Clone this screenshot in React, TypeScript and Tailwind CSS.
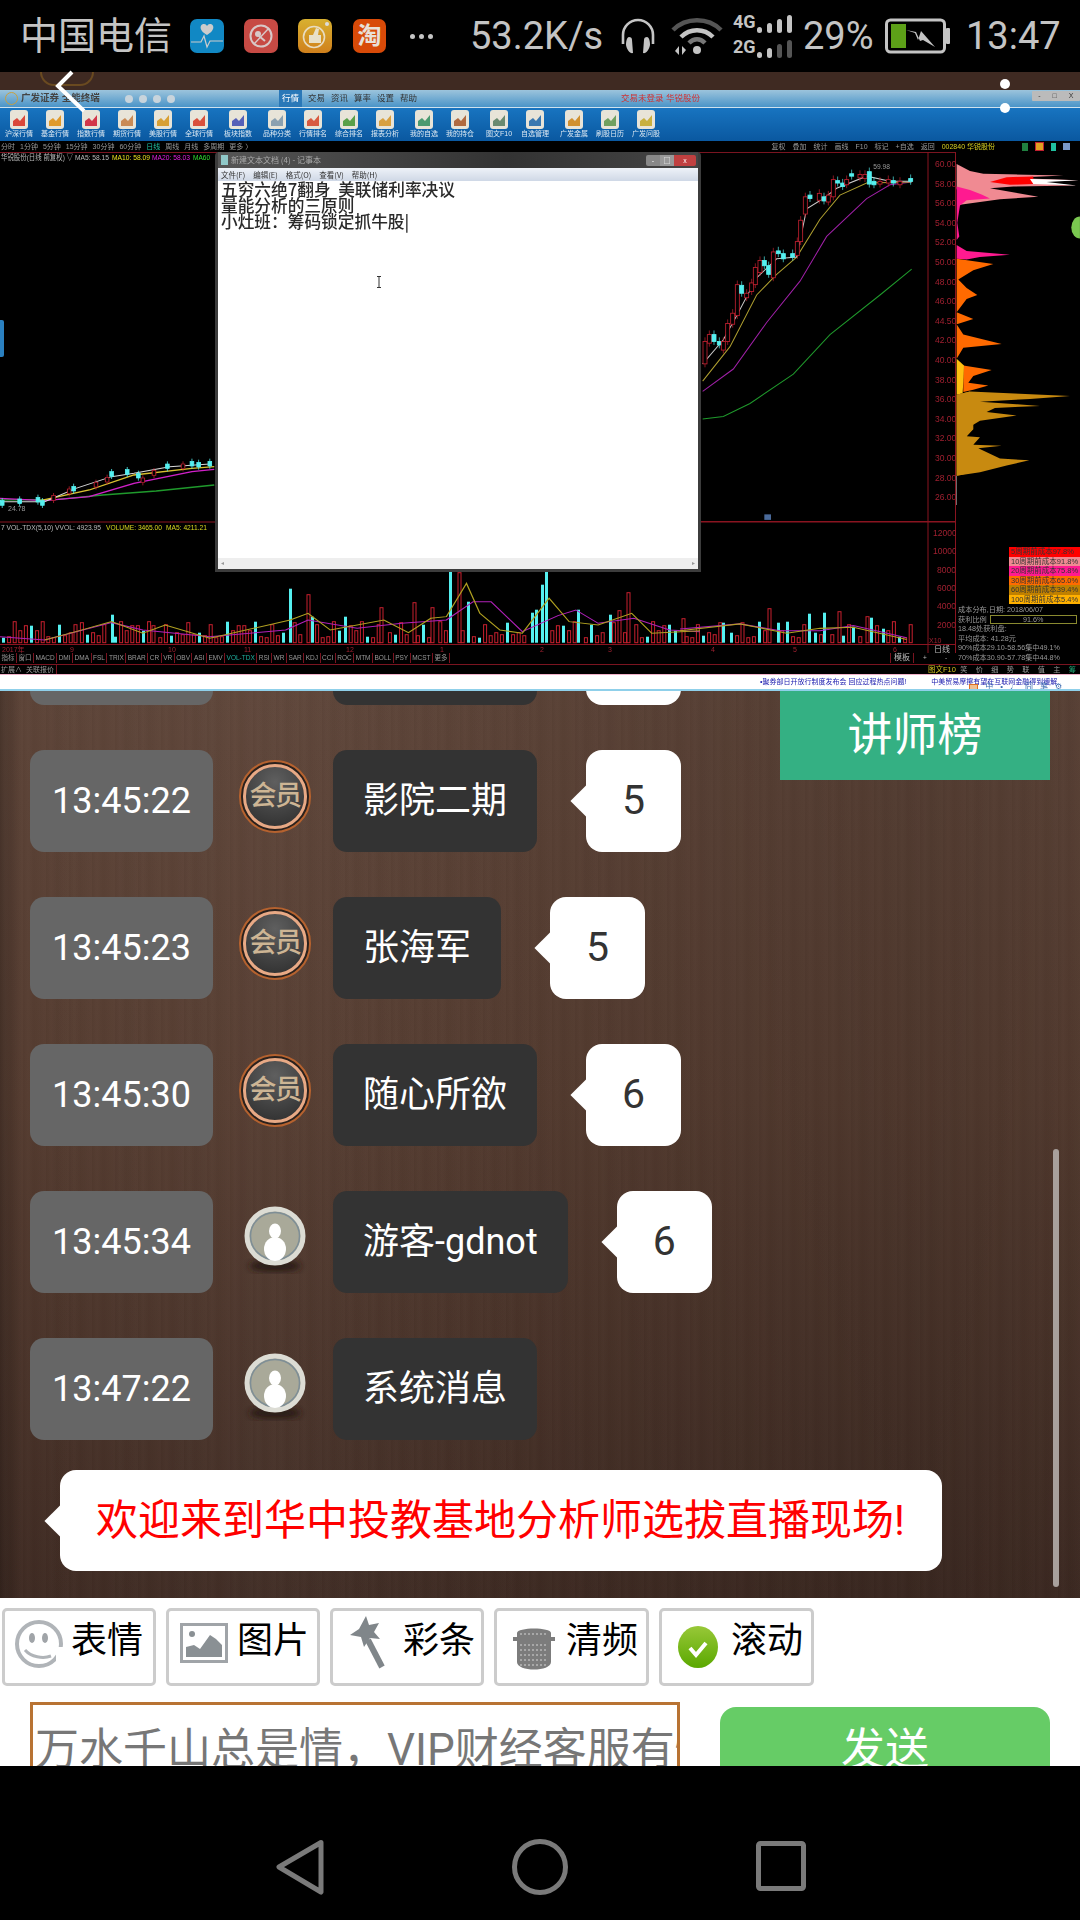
import React from 'react';

const toolGroups = [
  [
    { label: '沪深行情', color: '#d9483b' },
    { label: '基金行情', color: '#e09a2b' },
    { label: '指数行情', color: '#d2364a' },
    { label: '期货行情', color: '#c98a55' },
    { label: '美股行情', color: '#d8a035' },
    { label: '全球行情', color: '#d8503c' },
  ],
  [{ label: '板块指数', color: '#5560b8' }],
  [
    { label: '品种分类', color: '#8aa0b0' },
    { label: '行情排名', color: '#d85a40' },
    { label: '综合排名', color: '#5aa04a' },
    { label: '报表分析', color: '#d8a040' },
  ],
  [
    { label: '我的自选', color: '#4a9a70' },
    { label: '我的持仓', color: '#b06a40' },
  ],
  [
    { label: '图文F10', color: '#6a8a70' },
    { label: '自选管理', color: '#3a78b0' },
  ],
  [
    { label: '广发金属', color: '#d09030' },
    { label: '刷股日历', color: '#70a060' },
    { label: '广发问股', color: '#c8b040' },
  ],
];

const indicators = ['指标', '窗口', 'MACD', 'DMI', 'DMA', 'FSL', 'TRIX', 'BRAR', 'CR', 'VR', 'OBV', 'ASI', 'EMV', 'VOL-TDX', 'RSI', 'WR', 'SAR', 'KDJ', 'CCI', 'ROC', 'MTM', 'BOLL', 'PSY', 'MCST', '更多'];

const legend = [
  { text: '5周期前成本97.8%', bg: 'bg-[#ff0000]' },
  { text: '10周期前成本91.8%', bg: 'bg-[#f08a92]' },
  { text: '20周期前成本75.8%', bg: 'bg-[#ff1a90]' },
  { text: '30周期前成本65.0%', bg: 'bg-[#ff6a00]' },
  { text: '60周期前成本39.4%', bg: 'bg-[#c08000]' },
  { text: '100周期前成本5.4%', bg: 'bg-[#ffb000]' },
];

const priceLabels = ['60.00', '58.00', '56.00', '54.00', '52.00', '50.00', '48.00', '46.00', '44.50', '42.00', '40.00', '38.00', '36.00', '34.00', '32.00', '30.00', '28.00', '26.00'];
const volLabels = ['12000', '10000', '8000', '6000', '4000', '2000'];
const dates: [number, string][] = [[2, '2017年'], [70, '9'], [168, '10'], [244, '11'], [346, '12'], [440, '1'], [540, '2'], [608, '3'], [711, '4'], [793, '5'], [893, '6']];

// x, height, cyan? in page pixels
const spikes: [number, number, boolean][] = [
  [449, 73, true], [458, 70, false], [545, 71, true], [541, 58, true], [467, 41, true], [289, 54, true], [307, 48, false],
  [111, 28, true], [74, 18, false], [152, 17, false], [344, 26, true], [311, 26, true], [385, 26, true], [413, 40, false],
  [380, 35, false], [431, 35, false], [577, 33, true], [627, 50, false], [609, 28, true], [535, 33, true], [531, 30, true],
  [618, 32, false], [682, 24, false], [668, 18, true], [741, 20, false], [768, 34, false], [722, 20, true], [777, 20, true],
  [808, 29, true], [823, 30, true], [838, 31, false], [852, 16, true], [866, 26, false], [870, 25, true], [882, 14, true],
];
const volBars = Array.from({ length: 163 }, (_, i) => ({ x: 2 + i * 5.6, h: 5 + ((i * i * 7 + i * 13) % 19), cyan: (i * 11) % 5 === 0 }));
spikes.forEach(([x, h, cyan]) => {
  volBars[Math.round((x - 2) / 5.6)] = { x, h, cyan };
});

// [x, top, bottom, cyan?] in the right chart crop's coordinates
const candles: [number, number, number, boolean][] = [
  [75, 585, 650, false], [88, 565, 590, false], [102, 565, 585, true], [118, 585, 595, true], [130, 585, 610, false], [143, 533, 585, false],
  [158, 503, 535, false], [172, 420, 510, false], [185, 422, 445, true], [200, 445, 458, false], [215, 415, 440, false], [226, 370, 420, false],
  [240, 350, 385, false], [253, 350, 365, true], [266, 365, 390, true], [280, 325, 400, false], [295, 322, 330, true], [310, 330, 345, true],
  [338, 330, 340, true], [352, 295, 335, false], [362, 233, 295, false], [376, 165, 215, false], [390, 160, 170, true], [418, 155, 175, false],
  [432, 165, 177, true], [445, 160, 180, false], [460, 115, 165, false], [473, 118, 125, true], [488, 125, 135, true], [500, 115, 130, false],
  [515, 98, 105, true], [540, 100, 110, false], [555, 100, 112, false], [568, 92, 128, true], [582, 120, 130, true], [600, 120, 128, false],
  [625, 115, 125, false], [640, 118, 125, true], [660, 120, 130, false], [692, 112, 120, true],
];
const leftCandles: [number, number, boolean][] = [
  [5, 190, true], [44, 185, true], [85, 180, true], [95, 190, true], [120, 175, false], [155, 155, false], [165, 147, true], [215, 135, false],
  [240, 120, false], [250, 103, true], [285, 97, true], [310, 108, true], [320, 122, false], [345, 100, false], [375, 80, true], [410, 80, false],
  [430, 72, true], [445, 75, true], [470, 72, true],
];

function Bubble({ value }: { value: string }) {
  return (
    <div className="relative ml-[49px] flex h-[102px] w-[95px] items-center justify-center rounded-[16px] bg-white text-[41px] text-[#333]">
      <span className="absolute -left-[11px] top-[40px] h-[22px] w-[22px] rotate-45 bg-white" />
      <span className="relative">{value}</span>
    </div>
  );
}

function MemberBadge() {
  return (
    <div className="flex h-[73px] w-[72px] items-center justify-center rounded-full border-[2px] border-[#b5622f] bg-[#2a211d] p-[2px]">
      <div className="flex h-full w-full items-center justify-center rounded-full border-[3px] border-[#e8a985] bg-[radial-gradient(circle_at_50%_25%,#5f5f5f,#2c2c2c)]">
        <span className="whitespace-nowrap text-[27px] font-medium tracking-[-1.5px] text-[#cdb594]">会员</span>
      </div>
    </div>
  );
}

function GuestBadge() {
  return (
    <svg width="72" height="72" viewBox="0 0 72 72">
      <defs>
        <filter id="soft">
          <feGaussianBlur stdDeviation="3" />
        </filter>
      </defs>
      <ellipse cx="36" cy="60" rx="26" ry="6" fill="#2a1a14" filter="url(#soft)" />
      <ellipse cx="36" cy="30" rx="28" ry="27" fill="#a9a999" stroke="#dcdcd4" strokeWidth="5" />
      <ellipse cx="36" cy="30" rx="24.5" ry="23.5" fill="none" stroke="#7e8e96" strokeWidth="1.5" />
      <ellipse cx="36" cy="25" rx="6" ry="7.5" fill="#fff" />
      <ellipse cx="36" cy="43" rx="11" ry="12" fill="#fff" />
    </svg>
  );
}

const rows = [
  { time: '13:45:20', name: '影院二期', level: '5', vip: true },
  { time: '13:45:22', name: '影院二期', level: '5', vip: true },
  { time: '13:45:23', name: '张海军', level: '5', vip: true },
  { time: '13:45:30', name: '随心所欲', level: '6', vip: true },
  { time: '13:45:34', name: '游客-gdnot', level: '6', vip: false },
  { time: '13:47:22', name: '系统消息', level: '', vip: false },
];

function MainChart() {
  return (
    <svg viewBox="0 152 956 501" className="block h-[501px] w-[956px] font-['Liberation_Sans','Noto_Sans_CJK_SC',sans-serif]">
      <line x1="0" y1="152.5" x2="956" y2="152.5" stroke="#7a1420" />
      <text x="1" y="160" fontSize="7.5" fill="#bbb" textLength="72" lengthAdjust="spacingAndGlyphs">华锐股份(日线 前复权) ▽</text>
      <text x="75" y="160" fontSize="7.5" fill="#bbb" textLength="34" lengthAdjust="spacingAndGlyphs">MA5: 58.15</text>
      <text x="112" y="160" fontSize="7.5" fill="#e8e020" textLength="38" lengthAdjust="spacingAndGlyphs">MA10: 58.09</text>
      <text x="152" y="160" fontSize="7.5" fill="#e020e0" textLength="38" lengthAdjust="spacingAndGlyphs">MA20: 58.03</text>
      <text x="193" y="160" fontSize="7.5" fill="#30e030" textLength="17" lengthAdjust="spacingAndGlyphs">MA60</text>

      {/* right of the notepad */}
      <g transform="translate(680 140) scale(0.3333 0.3444)">
        <polyline points="68,810 130,803 210,765 340,680 450,565 600,450 695,375" fill="none" stroke="#1f9a2c" strokeWidth="3" />
        <polyline points="68,730 160,665 260,530 360,410 440,280 560,170 630,130 695,122" fill="none" stroke="#a020a8" strokeWidth="3" />
        <polyline points="68,700 150,600 230,450 290,390 350,340 420,230 480,160 560,125 695,122" fill="none" stroke="#b0a030" strokeWidth="3" />
        <polyline points="68,650 130,580 170,510 230,400 290,345 350,340 380,200 430,170 470,140 560,105 630,120 695,120" fill="none" stroke="#c8c8c8" strokeWidth="3" />
        {candles.map(([x, top, bottom, cyan]) => (
          <g key={x}>
            <line x1={x} y1={top - 12} x2={x} y2={bottom + 10} stroke={cyan ? '#55f0f0' : '#c02030'} strokeWidth="2" />
            <rect x={x - 6} y={top} width="12" height={bottom - top} fill={cyan ? '#55f0f0' : '#000'} stroke={cyan ? '#55f0f0' : '#c02030'} strokeWidth="2.5" />
          </g>
        ))}
        <text x="580" y="85" fontSize="20" fill="#999">59.98</text>
        <rect x="253" y="1087" width="20" height="16" fill="#4a6a9a" />
      </g>

      {/* left of the notepad */}
      <g transform="translate(0 440) scale(0.4464 0.3333)">
        <polyline points="0,180 130,178 230,165 350,153 480,135" fill="none" stroke="#1f9a2c" strokeWidth="4" />
        <polyline points="0,175 100,182 200,170 300,130 430,95 480,88" fill="none" stroke="#d020c8" strokeWidth="4" />
        <polyline points="80,185 200,150 300,105 430,85 480,80" fill="none" stroke="#d8c030" strokeWidth="4" />
        <polyline points="0,185 100,185 170,145 250,110 300,100 380,80 470,72" fill="none" stroke="#d8d8d8" strokeWidth="3" />
        {leftCandles.map(([x, y, cyan]) => (
          <g key={x}>
            <line x1={x} y1={y - 16} x2={x} y2={y + 14} stroke={cyan ? '#55f0f0' : '#c02030'} strokeWidth="2" />
            <rect x={x - 4} y={y - 8} width="8" height="14" fill={cyan ? '#55f0f0' : '#000'} stroke={cyan ? '#55f0f0' : '#c02030'} strokeWidth="2" />
          </g>
        ))}
      </g>
      <text x="8" y="511" fontSize="7" fill="#999">24.78</text>

      {/* volume */}
      <line x1="0" y1="522" x2="956" y2="522" stroke="#8a1420" />
      <text x="1" y="530" fontSize="7.5" fill="#bbb" textLength="100" lengthAdjust="spacingAndGlyphs">7 VOL-TDX(5,10) VVOL: 4923.95</text>
      <text x="106" y="530" fontSize="7.5" fill="#d8d820" textLength="56" lengthAdjust="spacingAndGlyphs">VOLUME: 3465.00</text>
      <text x="166" y="530" fontSize="7.5" fill="#d8d820" textLength="41" lengthAdjust="spacingAndGlyphs">MA5: 4211.21</text>
      {volBars.map((b) => (
        <rect
          key={b.x}
          x={b.x}
          y={642.7 - b.h}
          width="3"
          height={b.h}
          fill={b.cyan ? '#55f0f0' : '#000'}
          stroke={b.cyan ? 'none' : '#c8202e'}
          strokeWidth="1"
        />
      ))}
      <g transform="translate(0 440) scale(0.4464 0.3333)">
        <polyline points="0,590 100,600 250,548 320,570 470,590 640,570 690,540 800,565 900,550 1000,540 1060,485 1100,485 1170,575 1250,527 1290,510 1340,550 1420,535 1500,570 1568,575" fill="none" stroke="#b020b8" strokeWidth="3" />
        <polyline points="100,600 170,575 250,545 320,580 370,555 470,595 650,540 690,520 740,570 860,540 915,578 965,535 1000,530 1045,430 1075,520 1120,570 1170,580 1230,475 1275,545 1340,555 1415,520 1460,580 1568,572" fill="none" stroke="#b0a020" strokeWidth="3" />
      </g>
      <g transform="translate(680 140) scale(0.3333 0.3444)">
        <polyline points="0,1420 180,1405 300,1425 420,1425 520,1410 680,1445" fill="none" stroke="#b020b8" strokeWidth="3" />
        <polyline points="0,1425 180,1405 320,1432 420,1418 520,1415 680,1450" fill="none" stroke="#b0a020" strokeWidth="3" />
      </g>

      {/* axes */}
      <line x1="928" y1="152" x2="928" y2="653" stroke="#8a1420" />
      <line x1="700" y1="521.5" x2="956" y2="521.5" stroke="#8a1420" />
      <line x1="955.5" y1="152" x2="955.5" y2="653" stroke="#8a1420" />
      <line x1="0" y1="644.5" x2="956" y2="644.5" stroke="#8a1420" />
      {priceLabels.map((label, i) => (
        <text key={label} x="935" y={167 + i * 19.6} fontSize="8.5" fill="#a02030">{label}</text>
      ))}
      {volLabels.map((label, i) => (
        <text key={label} x={label.length > 4 ? 933 : 937} y={536 + i * 18.3} fontSize="8.5" fill="#a02030">{label}</text>
      ))}
      <text x="929" y="643" fontSize="7" fill="#a02030">X10</text>
      {dates.map(([x, label]) => (
        <text key={x} x={x} y="651.5" fontSize="7" fill="#a02030">{label}</text>
      ))}
      <text x="934" y="652" fontSize="8" fill="#bbb">日线</text>
    </svg>
  );
}

function ChipChart() {
  return (
    <svg viewBox="956 152 124 395" className="block h-[395px] w-[124px]">
      <g transform="translate(680 140) scale(0.3333 0.3444)">
        <path d="M830,70 L870,90 L910,98 L1150,103 L1000,110 L1195,117 L1000,122 L1190,132 L1000,135 L930,140 L1075,165 L960,172 L840,188 L830,140 Z" fill="#f08a92" />
        <path d="M930,122 L980,108 L1060,106 L1060,128 L990,130 Z" fill="#ff0000" />
        <path d="M1050,113 L1195,117 L1100,122 L1190,132 L1060,128 Z" fill="#fff" />
        <path d="M830,135 L870,145 L905,158 L930,170 L860,175 L840,190 L832,240 L838,280 L830,290 Z" fill="#ff1a90" />
        <path d="M830,305 L860,322 L990,333 L900,340 L860,347 L830,345 Z" fill="#ff1a90" />
        <path d="M830,345 L940,360 L880,378 L835,405 L860,430 L892,450 L860,462 L830,500 L880,520 L840,532 L830,535 L850,565 L965,592 L850,603 L830,635 Z" fill="#ff6a00" />
        <path d="M850,655 L935,668 L880,685 L865,705 L925,713 L880,725 L850,732 Z" fill="#ff6a00" />
        <path d="M830,635 L852,655 L850,700 L848,735 L830,740 Z" fill="#ffc010" />
        <path d="M830,740 L870,730 L880,760 L880,840 L860,860 L880,885 L880,965 L830,975 Z" fill="#c88a10" />
        <path d="M830,740 L870,730 L1170,743 L1050,752 L900,760 L1080,772 L945,778 L920,790 L1010,800 L900,815 L875,830 L878,840 L860,860 L900,863 L880,885 L965,888 L895,895 L960,925 L1048,930 L980,945 L900,965 L830,975 Z" fill="#c88a10" />
        <line x1="829" y1="975" x2="829" y2="1060" stroke="#888" strokeWidth="3" />
        <path d="M1200,222 A26,32 0 0 0 1200,286 Z" fill="#7ac850" />
      </g>
    </svg>
  );
}

function Notepad() {
  return (
    <div className="absolute left-[215px] top-0 flex h-[420px] w-[486px] flex-col rounded-t-[4px] border-x-[3px] border-b-[3px] border-[#3c3c3c] bg-[#3c3c3c]">
      <div className="flex h-[16px] items-center justify-between bg-[linear-gradient(90deg,#555,#333_60%,#444)] pl-[3px] pr-[2px] font-['Noto_Sans_CJK_SC',sans-serif] text-[8px] text-[#aaa]">
        <div className="flex items-center gap-[3px]">
          <span className="h-[10px] w-[7px] bg-[#8fc8c8]" />
          <span>新建文本文档 (4) - 记事本</span>
        </div>
        <div className="flex h-[11px] overflow-hidden rounded-[2px] text-[7px] leading-[11px]">
          <span className="w-[14px] bg-[#888] text-center text-white">-</span>
          <span className="w-[14px] bg-[#999] text-center text-white">□</span>
          <span className="w-[22px] bg-[#c04040] text-center text-white">x</span>
        </div>
      </div>
      <div className="flex h-[13px] items-center gap-[8px] bg-[linear-gradient(180deg,#eef2f8,#cfd8e6)] pl-[3px] font-['Noto_Sans_CJK_SC',sans-serif] text-[7.5px] text-[#333]">
        <span>文件(F)</span>
        <span>编辑(E)</span>
        <span>格式(O)</span>
        <span>查看(V)</span>
        <span>帮助(H)</span>
      </div>
      <div className="relative flex-1 bg-white pl-[3px] font-['Noto_Sans_CJK_SC',sans-serif] text-[16.7px] font-medium leading-[16px] text-[#2a2a2a]">
        <p className="whitespace-pre">五穷六绝7翻身  美联储利率决议</p>
        <p className="whitespace-pre">量能分析的三原则</p>
        <p className="whitespace-pre">小灶班：筹码锁定抓牛股|</p>
        <svg className="absolute left-[158px] top-[95px]" width="6" height="12" viewBox="0 0 6 12">
          <path d="M1 .5h4M3 .5v11M1 11.5h4" stroke="#333" fill="none" />
        </svg>
      </div>
      <div className="flex h-[11px] items-center justify-between bg-[#eeeeee] px-[3px] text-[6px] text-[#999]">
        <span>◂</span>
        <span>▸</span>
      </div>
    </div>
  );
}

function VideoFrame() {
  return (
    <div className="relative flex h-[584px] shrink-0 flex-col overflow-hidden bg-black font-['Liberation_Sans','Noto_Sans_CJK_SC',sans-serif] blur-[0.4px]">
      {/* title bar */}
      <div className="flex h-[17px] shrink-0 items-center bg-[linear-gradient(180deg,#9cc4dc,#4a94c8)] text-[8.5px] text-[#333]">
        <span className="ml-[5px] mr-[3px] h-[13px] w-[13px] rounded-full border border-[#c8a040]" />
        <span className="w-[84px] whitespace-nowrap text-[9.5px] font-bold text-[#444]">广发证券 全能终端</span>
        <div className="ml-[20px] flex gap-[6px]">
          {[0, 1, 2, 3].map((i) => (
            <span key={i} className="h-[8px] w-[8px] rounded-full bg-[#c8d4dc]" />
          ))}
        </div>
        <div className="ml-[104px] flex h-full items-center gap-[6px]">
          <span className="bg-[#2a78b8] px-[3px] leading-[17px] text-white">行情</span>
          <span>交易</span>
          <span>资讯</span>
          <span>算率</span>
          <span>设置</span>
          <span>帮助</span>
        </div>
        <span className="ml-[204px] whitespace-nowrap text-[#d03030]">交易未登录 华锐股份</span>
        <div className="ml-auto mb-[5px] flex h-[10px] overflow-hidden rounded-[1px] bg-[#bbb] text-[7px] leading-[10px] text-[#333]">
          <span className="w-[15px] text-center">-</span>
          <span className="w-[15px] text-center">□</span>
          <span className="w-[18px] text-center">X</span>
        </div>
      </div>

      {/* toolbar */}
      <div className="flex h-[34px] shrink-0 gap-[3px] border-t border-[#cfe2ee] bg-[linear-gradient(180deg,#1874c0,#0a58a0)] pl-[1px]">
        {toolGroups.map((group, g) => (
          <div key={g} className="flex">
            {group.map((tool) => (
              <div key={tool.label} className="flex w-[36px] flex-col items-center pt-[2px]">
                <svg width="18" height="19" viewBox="0 0 18 19">
                  <rect width="18" height="19" rx="3" fill="#e8e4d8" />
                  <path d="M3 16V11l4-3 3 3 5-6v11z" fill={tool.color} />
                </svg>
                <span className="whitespace-nowrap text-[7px] leading-[10px] text-[#dbe8f2]">{tool.label}</span>
              </div>
            ))}
          </div>
        ))}
      </div>

      {/* period row */}
      <div className="flex h-[11px] shrink-0 items-center bg-black text-[7px] leading-[11px] text-[#999]">
        <div className="flex gap-[5px] pl-[1px]">
          <span>分时</span>
          <span>1分钟</span>
          <span>5分钟</span>
          <span>15分钟</span>
          <span>30分钟</span>
          <span>60分钟</span>
          <span className="text-[#20c0a0]">日线</span>
          <span>周线</span>
          <span>月线</span>
          <span>多周期</span>
          <span>更多 〉</span>
        </div>
        <div className="ml-auto flex items-center gap-[7px] pr-[10px]">
          <span>复权</span>
          <span>叠加</span>
          <span>统计</span>
          <span>画线</span>
          <span>F10</span>
          <span>标记</span>
          <span>+自选</span>
          <span>返回</span>
          <span className="text-[#d8d020]">002840 华锐股份</span>
          <span className="ml-[20px] h-[8px] w-[6px] bg-[#208040]" />
          <span className="h-[9px] w-[9px] border border-[#c02030] bg-[#e0a020]" />
          <span className="h-[8px] w-[5px] bg-[#20c0a0]" />
          <span className="h-[7px] w-[7px] bg-[#7a98c8]" />
        </div>
      </div>

      {/* body */}
      <div className="flex flex-1">
        <div className="relative flex w-[956px] flex-col">
          <MainChart />
          <Notepad />
          <div className="flex h-[10px] items-center text-[6.5px] leading-[10px] text-[#999]">
            {indicators.map((name) => (
              <span key={name} className={name === 'VOL-TDX' ? 'whitespace-nowrap border-r border-[#7a1420] px-[1.5px] text-[#20b0a0]' : 'whitespace-nowrap border-r border-[#7a1420] px-[1.5px]'}>
                {name}
              </span>
            ))}
            <span className="ml-auto border-x border-[#7a1420] px-[3px] text-[8px] text-[#bbb]">模板</span>
            <span className="w-[22px] text-center text-[#bbb]">+</span>
            <span className="w-[20px] text-center text-[#bbb]">-</span>
          </div>
          <div className="mt-[1px] flex h-[10px] items-center border-t border-[#7a1420] text-[7px] leading-[10px] text-[#999]">
            <span className="px-[1px]">扩展∧</span>
            <span className="ml-[3px] border-r border-[#7a1420] pr-[2px]">关联报价</span>
            <span className="ml-auto w-[28px] whitespace-nowrap text-center text-[7.5px] text-[#d0c020]">图文F10</span>
          </div>
        </div>
        <div className="flex w-[124px] flex-col text-[7.2px] leading-[9.6px] text-[#999]">
          <ChipChart />
          <div className="ml-[53px] flex flex-col whitespace-nowrap text-[7.5px] text-[#333]">
            {legend.map((item) => (
              <div key={item.text} className={`h-[9.5px] pl-[2px] leading-[9.5px] ${item.bg}`}>
                {item.text}
              </div>
            ))}
          </div>
          <div className="mt-[1px] flex flex-col whitespace-nowrap pl-[2px]">
            <span>成本分布,日期: 2018/06/07</span>
            <div className="flex items-center">
              <span>获利比例</span>
              <span className="ml-[3px] flex h-[9px] w-[87px] justify-center border border-[#8a8a30] leading-[8px]">91.6%</span>
            </div>
            <span>18.48处获利盘:</span>
            <span>平均成本: 41.28元</span>
            <span>90%成本29.10-58.56集中49.1%</span>
            <span>70%成本30.90-57.78集中44.8%</span>
          </div>
          <div className="mt-auto flex h-[10px] justify-around border-t border-[#7a1420] leading-[10px]">
            {['笑', '价', '细', '势', '联', '值', '主', '筹'].map((c) => (
              <span key={c} className={c === '筹' ? 'text-[#20a070]' : ''}>{c}</span>
            ))}
          </div>
        </div>
      </div>
      <span className="absolute left-0 top-[230px] h-[37px] w-[4px] rounded-r-[2px] bg-[#2a80c0]" />
    </div>
  );
}

export default function App() {
  return (
    <div className="relative flex h-[1920px] w-[1080px] flex-col overflow-hidden bg-black font-['Roboto','Noto_Sans_CJK_SC',sans-serif]">
      {/* status bar */}
      <div className="flex h-[72px] shrink-0 items-center text-[#c4c4c4]">
        <span className="ml-[20px] w-[152px] whitespace-nowrap text-[38px] leading-none">中国电信</span>
        <svg className="ml-[18px]" width="34" height="34" viewBox="0 0 34 34">
          <rect width="34" height="34" rx="7" fill="#1188c4" />
          <path d="M17 16c-9-5-7-11-3-11 2 0 3 2 3 2s1-2 3-2c4 0 6 6-3 11z" fill="#ccc" />
          <path d="M1 23h10l3-6 3 11 3-6h13" stroke="#ccc" fill="none" strokeWidth="1.2" />
        </svg>
        <svg className="ml-[20px]" width="34" height="34" viewBox="0 0 34 34">
          <rect width="34" height="34" rx="7" fill="#c74a44" />
          <circle cx="17" cy="17" r="10.5" stroke="#d8c8c8" strokeWidth="2" fill="none" />
          <path d="M10 25 25 9" stroke="#d8c8c8" strokeWidth="1.5" />
          <circle cx="14" cy="15" r="3" fill="#d8c8c8" />
          <path d="M15 17l6 5" stroke="#d8c8c8" strokeWidth="2" />
        </svg>
        <svg className="ml-[20px]" width="34" height="34" viewBox="0 0 34 34">
          <defs>
            <linearGradient id="gold" x1="0" y1="0" x2="0" y2="1">
              <stop offset="0" stopColor="#d8b030" />
              <stop offset="1" stopColor="#d0801c" />
            </linearGradient>
          </defs>
          <rect width="34" height="34" rx="7" fill="url(#gold)" />
          <circle cx="16" cy="18" r="10.5" stroke="#e8dcc0" strokeWidth="1.6" fill="none" />
          <path d="M11 16h4l3-7 3 1-1 6h3v8H11z" fill="#e8e0c8" />
          <circle cx="29" cy="5" r="2" fill="#ddd" />
        </svg>
        <div className="ml-[21px] flex h-[34px] w-[33px] items-center justify-center rounded-[7px] bg-[#d84a08] text-[24px] font-bold leading-none text-[#e8e0d8]">淘</div>
        <span className="ml-[24px] flex gap-[4px]">
          <span className="h-[5px] w-[5px] rounded-full bg-[#c4c4c4]" />
          <span className="h-[5px] w-[5px] rounded-full bg-[#c4c4c4]" />
          <span className="h-[5px] w-[5px] rounded-full bg-[#c4c4c4]" />
        </span>
        <span className="ml-[37px] w-[134px] whitespace-nowrap text-[38px] leading-none">53.2K/s</span>
        <svg className="ml-[16px]" width="36" height="38" viewBox="0 0 36 38">
          <path d="M3 27V18a15 15 0 0 1 30 0v9" stroke="#c4c4c4" strokeWidth="2.6" fill="none" />
          <path d="M9 20c2 0 3 1 3 3l1 13c-3 1-6-3-7-8 0-4 1-8 3-8zM27 20c-2 0-3 1-3 3l-1 13c3 1 6-3 7-8 0-4-1-8-3-8z" fill="#c4c4c4" />
        </svg>
        <svg className="ml-[14px]" width="54" height="38" viewBox="0 0 54 38">
          <path d="M3 13C16 0 38 0 51 13" stroke="#555" strokeWidth="4.5" fill="none" />
          <path d="M11 20C20 11 34 11 43 20" stroke="#c4c4c4" strokeWidth="4.5" fill="none" />
          <path d="M19 26C24 21 30 21 35 26" stroke="#777" strokeWidth="4.5" fill="none" />
          <circle cx="27" cy="33" r="4" fill="#c4c4c4" />
          <path d="M5 34l4-5v9zM12 29v9l4-5z" fill="#c4c4c4" />
        </svg>
        <div className="-mt-[4px] ml-[9px] flex w-[60px] flex-col text-[18px] font-bold leading-[25px]">
          <div className="flex h-[25px] items-end justify-between">
            <span className="leading-[25px]">4G</span>
            <svg width="36" height="20" viewBox="0 0 36 20">
              <rect x="0" y="13" width="5" height="6" rx="2.5" fill="#c4c4c4" />
              <rect x="10" y="9" width="5" height="10" rx="2.5" fill="#c4c4c4" />
              <rect x="20" y="5" width="5" height="14" rx="2.5" fill="#c4c4c4" />
              <rect x="30" y="1" width="5" height="18" rx="2.5" fill="#c4c4c4" />
            </svg>
          </div>
          <div className="flex h-[25px] items-end justify-between">
            <span className="leading-[25px]">2G</span>
            <svg width="36" height="20" viewBox="0 0 36 20">
              <rect x="0" y="13" width="5" height="6" rx="2.5" fill="#c4c4c4" />
              <rect x="10" y="9" width="5" height="10" rx="2.5" fill="#c4c4c4" />
              <rect x="20" y="5" width="5" height="14" rx="2.5" fill="#555" />
              <rect x="30" y="1" width="5" height="18" rx="2.5" fill="#555" />
            </svg>
          </div>
        </div>
        <span className="ml-[10px] w-[70px] whitespace-nowrap text-[38px] leading-none">29%</span>
        <svg className="ml-[12px]" width="66" height="36" viewBox="0 0 66 36">
          <rect x="1.5" y="2" width="58" height="32" rx="4" stroke="#c4c4c4" strokeWidth="3" fill="none" />
          <rect x="61" y="10" width="4" height="16" rx="1" fill="#c4c4c4" />
          <rect x="6" y="6" width="15" height="24" fill="#5da018" />
          <path d="M21 12l9 3 3 7 3-9 14 16-12-7-3 1-4-9z" fill="#c4c4c4" />
        </svg>
        <span className="ml-[15px] whitespace-nowrap text-[38px] leading-none">13:47</span>
      </div>

      {/* wood strip above the video */}
      <div className="h-[18px] shrink-0 bg-[#3f2a22]">
        <div className="ml-[40px] h-[14px] w-[54px] rounded-b-full border-x-2 border-b-2 border-[#6a4a20]" />
      </div>

      <VideoFrame />

      {/* marquee strip */}
      <div className="relative flex h-[15px] shrink-0 items-start gap-[25px] overflow-hidden border-t border-[#f0b0c8] bg-white pl-[760px] font-['Liberation_Sans','Noto_Sans_CJK_SC',sans-serif] text-[7px] leading-[14px] text-[#2020b0] blur-[0.3px]">
        <span className="whitespace-nowrap">•聚券部日开放行制度发布会 回应过程热点问题!</span>
        <span className="whitespace-nowrap">中美贸易摩擦有望在互联网金融得到缓解</span>
        <div className="absolute bottom-[-2px] right-[18px] flex items-center gap-[7px] text-[8px] leading-[8px] text-[#3a6ab0]">
          <span className="h-[7px] w-[9px] border border-[#e07020] bg-[#f0c090]" />
          <span>中</span>
          <span>•</span>
          <span>♩</span>
          <span>囧</span>
          <span>笔</span>
          <span>⚙</span>
        </div>
      </div>

      {/* chat */}
      <div className="relative h-[909px] shrink-0 overflow-hidden border-t-2 border-[#8fd0ea] bg-[linear-gradient(90deg,rgba(0,0,0,.2),rgba(0,0,0,0)_2%,rgba(255,255,255,.02)_25%,rgba(0,0,0,.03)_50%,rgba(0,0,0,.1)_85%,rgba(0,0,0,.06)),linear-gradient(180deg,#5d4438,#553c30_45%,#3f2b23)] text-white">
        <div className="absolute inset-0 bg-[repeating-linear-gradient(90deg,rgba(0,0,0,.025)_0px,rgba(255,255,255,.01)_5px,rgba(0,0,0,.02)_11px,rgba(255,255,255,.012)_23px)]" />
        <div className="relative -mt-[88px] flex flex-col gap-[45px] pl-[30px]">
          {rows.map((row, i) => (
            <div key={i} className="flex h-[102px] items-center">
              <div className="flex h-[102px] w-[183px] items-center justify-center rounded-[14px] bg-[#666666] text-[36px]">{row.time}</div>
              <div className={row.vip ? 'ml-[26px] flex h-[102px] w-[72px] items-start pt-[10px]' : 'ml-[26px] flex h-[102px] w-[72px] items-start pt-[15px]'}>
                {row.vip ? <MemberBadge /> : <GuestBadge />}
              </div>
              <div className="ml-[22px] flex h-[102px] items-center rounded-[14px] bg-[#333333] px-[30px] text-[36px]">{row.name}</div>
              {row.level && <Bubble value={row.level} />}
            </div>
          ))}
          <div className="relative -mt-[15px] ml-[30px] flex h-[101px] w-[882px] items-center rounded-[16px] bg-white pl-[36px] text-[42px] text-[#ff0000]">
            <span className="absolute -left-[11px] top-[40px] h-[22px] w-[22px] rotate-45 bg-white" />
            <span className="relative whitespace-nowrap">欢迎来到华中投教基地分析师选拔直播现场!</span>
          </div>
        </div>
        <div className="absolute right-[30px] top-0 flex h-[89px] w-[270px] items-center justify-center bg-[#34b083] text-[45px]">讲师榜</div>
        <div className="absolute right-[21px] top-[458px] h-[438px] w-[6px] rounded-full bg-[#a8a09c]" />
      </div>

      {/* composer */}
      <div className="h-[168px] shrink-0 overflow-hidden bg-white">
        <div className="flex gap-[10px] pl-[2px] pt-[10px] text-[36px] leading-none text-black">
          <div className="flex h-[78px] w-[154px] items-start rounded-[5px] border-[3px] border-[#cccccc] pl-[9px]">
            <svg className="mt-[8px] shrink-0" width="52" height="50" viewBox="0 0 52 50">
              <circle cx="25" cy="25" r="22" fill="none" stroke="#b0b4b8" strokeWidth="4" />
              <ellipse cx="18" cy="19" rx="3" ry="5" fill="#a0a4a8" />
              <ellipse cx="31" cy="19" rx="3" ry="5" fill="#a0a4a8" />
              <path d="M11 31c6 7 18 9 26 6" stroke="#b0b4b8" strokeWidth="3" fill="none" />
              <rect x="42" y="28" width="10" height="22" fill="#fff" />
            </svg>
            <span className="ml-[5px] mt-[12px] whitespace-nowrap">表情</span>
          </div>
          <div className="flex h-[78px] w-[154px] items-start rounded-[5px] border-[3px] border-[#cccccc] pl-[11px]">
            <svg className="mt-[12px] shrink-0" width="48" height="40" viewBox="0 0 48 40">
              <rect x="1.5" y="1.5" width="45" height="37" fill="#fff" stroke="#a0a4a8" strokeWidth="3" />
              <circle cx="12" cy="11" r="3" fill="#8a9094" />
              <path d="M6 34V24l8-2 6 4 10-14 6 4 6 6v12z" fill="#8a9094" />
            </svg>
            <span className="ml-[9px] mt-[12px] whitespace-nowrap">图片</span>
          </div>
          <div className="flex h-[78px] w-[154px] items-start rounded-[5px] border-[3px] border-[#cccccc] pl-[11px]">
            <svg className="mt-[3px] shrink-0" width="46" height="56" viewBox="0 0 46 56">
              <path d="M22 2l3 9 10-2-5 9 6 7-10-1-6 9-3-10-11-2 9-6z" fill="#80868a" />
              <path d="M24 26l14 27" stroke="#80868a" strokeWidth="6" />
            </svg>
            <span className="ml-[13px] mt-[12px] whitespace-nowrap">彩条</span>
          </div>
          <div className="flex h-[78px] w-[155px] items-start rounded-[5px] border-[3px] border-[#cccccc] pl-[15px]">
            <svg className="mt-[13px] shrink-0" width="44" height="46" viewBox="0 0 44 46">
              <path d="M5 9c0-6 34-6 34 0v29c0 10-34 10-34 0z" fill="#7c7c7c" />
              <path d="M1 15h42" stroke="#7c7c7c" strokeWidth="4" />
              <path d="M8 10h28M8 21h28M8 26h28M8 31h28M8 36h28M8 41h28" stroke="#a8a8a8" strokeWidth="2" strokeDasharray="2 2" />
            </svg>
            <span className="ml-[10px] mt-[12px] whitespace-nowrap">清频</span>
          </div>
          <div className="flex h-[78px] w-[155px] items-start rounded-[5px] border-[3px] border-[#cccccc] pl-[15px]">
            <svg className="mt-[14px] shrink-0" width="42" height="44" viewBox="0 0 42 44">
              <defs>
                <linearGradient id="check" x1="0" y1="0" x2="0" y2="1">
                  <stop offset="0" stopColor="#98c838" />
                  <stop offset="1" stopColor="#5aa800" />
                </linearGradient>
              </defs>
              <ellipse cx="21" cy="22" rx="20" ry="21" fill="url(#check)" />
              <path d="M13 23l6 7 10-12" stroke="#fff" strokeWidth="4" fill="none" />
            </svg>
            <span className="ml-[12px] mt-[12px] whitespace-nowrap">滚动</span>
          </div>
        </div>
        <div className="ml-[30px] mt-[16px] flex items-start">
          <div className="h-[100px] w-[650px] overflow-hidden whitespace-nowrap border-[3px] border-[#b87333] pl-[2px] pt-[15px] text-[44px] leading-[60px] text-[#777777]">
            万水千山总是情，VIP财经客服有情
          </div>
          <div className="ml-[40px] mt-[5px] flex h-[100px] w-[330px] items-start justify-center rounded-[16px] bg-[#66cc66] pt-[13px] text-[44px] leading-[60px] text-white">发送</div>
        </div>
      </div>

      {/* navigation */}
      <div className="flex flex-1 items-start pt-[73px]">
        <svg className="ml-[274px]" width="52" height="56" viewBox="0 0 52 56">
          <path d="M47 3.5 5 28l42 25z" fill="none" stroke="#7a7a7a" strokeWidth="5" strokeLinejoin="round" />
        </svg>
        <svg className="ml-[186px]" width="56" height="56" viewBox="0 0 56 56">
          <ellipse cx="28" cy="28" rx="25.5" ry="25.5" fill="none" stroke="#7a7a7a" strokeWidth="5" />
        </svg>
        <svg className="ml-[188px] mt-[2px]" width="50" height="50" viewBox="0 0 50 50">
          <rect x="2.5" y="2.5" width="45" height="45" rx="2" fill="none" stroke="#7a7a7a" strokeWidth="5" />
        </svg>
      </div>

      {/* video overlay controls */}
      <svg className="absolute left-[50px] top-[64px]" width="44" height="52" viewBox="0 0 44 52">
        <path d="M22 8 8 22l26 25" fill="none" stroke="#fff" strokeWidth="4" />
      </svg>
      <span className="absolute left-[1000px] top-[79px] h-[10px] w-[10px] rounded-full bg-white" />
      <span className="absolute left-[1000px] top-[103px] h-[10px] w-[10px] rounded-full bg-white" />
    </div>
  );
}
